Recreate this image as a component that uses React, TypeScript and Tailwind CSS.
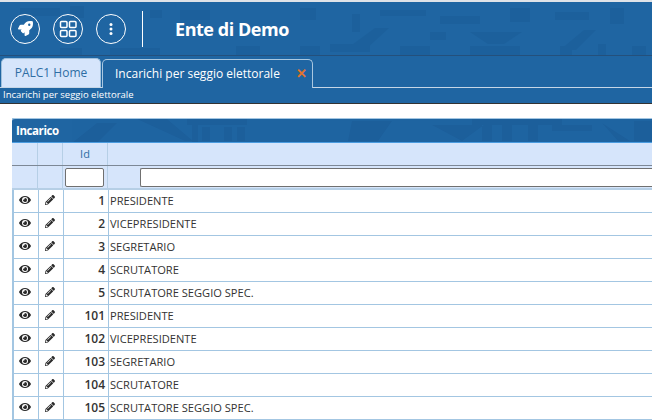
import React from "react";
import { FaRocket, FaEye, FaPencilAlt } from "react-icons/fa";

const rows: [number, string][] = [
  [1, "PRESIDENTE"],
  [2, "VICEPRESIDENTE"],
  [3, "SEGRETARIO"],
  [4, "SCRUTATORE"],
  [5, "SCRUTATORE SEGGIO SPEC."],
  [101, "PRESIDENTE"],
  [102, "VICEPRESIDENTE"],
  [103, "SEGRETARIO"],
  [104, "SCRUTATORE"],
  [105, "SCRUTATORE SEGGIO SPEC."],
];

const blocks: [number, number, number, number][] = [
  [20, 6, 40, 8], [70, 4, 14, 12], [110, 46, 50, 7], [180, 8, 30, 10], [236, 44, 24, 10], [300, 6, 16, 12],
  [330, 42, 40, 8], [352, 12, 8, 18], [380, 8, 46, 6], [400, 44, 30, 10], [440, 14, 40, 8], [470, 44, 50, 9],
  [510, 6, 20, 14], [555, 10, 34, 8], [560, 44, 12, 10], [610, 6, 14, 16], [632, 44, 14, 10], [598, 42, 8, 12],
  [300, 44, 20, 9], [60, 46, 22, 8], [430, 30, 16, 8], [150, 8, 12, 8],
];

function Texture() {
  return (
    <svg className="absolute left-0 top-0 w-[652px] h-[55px] pointer-events-none" viewBox="0 0 652 55" fill="#17568f" opacity="0.3">
      {blocks.map(([x, y, w, h], i) => (
        <rect key={i} x={x} y={y} width={w} height={h} />
      ))}
      <path d="M345 48l30-22h14l-24 22zM470 30h52l-18 12h-16zM560 48l24-20h12l-20 20z" />
    </svg>
  );
}

function TitleTexture() {
  return (
    <svg className="absolute left-0 top-0 w-[640px] h-[24px] pointer-events-none" viewBox="0 0 640 24" fill="#17568f" opacity="0.35">
      <path d="M60 24L85 4h20l-20 20zM125 0h30l26 22h-8zM175 0h60v6h-60zM180 6h6v18h-6zM190 8h8v14h-8zM212 8h8v14h-8zM225 8h8v14h-8zM340 2h40l-14 20h-30zM420 6l30 16 22-16zM460 0h90v6h-90zM470 6h10v16h-10zM490 6h10v16h-10zM516 6h10v16h-10zM540 6h40v6h-40zM590 4l16 18h12zM622 2h18v20h-18z" />
    </svg>
  );
}

export default function App() {
  return (
    <div className="w-[652px] h-[420px] overflow-hidden bg-white text-[#333] font-['Open_Sans',sans-serif]">
      <div className="relative h-[104px] bg-[#1f65a2] border-t-2 border-[#dfe3e8] border-b border-b-[#333]">
        <Texture />
        <div className="relative h-[54px] border-b border-[#24507c] flex items-center">
          <div className="flex items-center pl-[10px] gap-[13px]">
            <button className="w-[30px] h-[30px] rounded-full border-[1.5px] border-white flex items-center justify-center">
              <FaRocket size={15} color="white" />
            </button>
            <button className="w-[30px] h-[30px] rounded-full border-[1.5px] border-white flex items-center justify-center">
              <svg width="20" height="20" viewBox="0 0 20 20" fill="none" stroke="white" strokeWidth="1.500">
                <rect x="2.500" y="2.500" width="6.500" height="6" rx="1" />
                <rect x="11.500" y="2.500" width="6.500" height="6" rx="1" />
                <rect x="2.500" y="11.500" width="6.500" height="6" rx="1" />
                <rect x="11.500" y="11.500" width="6.500" height="6" rx="1" />
              </svg>
            </button>
            <button className="w-[30px] h-[30px] rounded-full border-[1.5px] border-white flex items-center justify-center">
              <svg width="4" height="14" viewBox="0 0 4 14" fill="white">
                <circle cx="2" cy="2.500" r="1.500" />
                <circle cx="2" cy="7" r="1.500" />
                <circle cx="2" cy="11.500" r="1.500" />
              </svg>
            </button>
          </div>
          <div className="w-px h-[36px] bg-white ml-[16px]" />
          <div className="ml-[32px] text-[18px] font-bold text-white leading-none tracking-[-0.45px]">Ente di Demo</div>
        </div>
        <div className="relative h-[32px] flex items-end pl-[1px] border-b border-[#c6d6e6]">
          <div className="w-[100px] h-[29px] bg-[#d6e5fb] rounded-t-[5px] border border-[#9fc0dc] border-b-0 flex items-center justify-center text-[12px] text-[#2e6da4]">
            PALC1 Home
          </div>
          <div className="relative z-10 -mb-px ml-px w-[211px] h-[29px] bg-[#1f65a2] rounded-t-[5px] border border-[#a9c7e0] border-b-0 flex items-center pl-[12px] text-[12px] text-white">
            Incarichi per seggio elettorale
            <span className="absolute right-[5px] top-[3px] text-[#e2742e] text-[13px] font-bold leading-[20px]">✕</span>
          </div>
        </div>
        <div className="relative h-[15px] pl-[3px] text-[9.500px] leading-[14px] text-white">Incarichi per seggio elettorale</div>
      </div>
      <div className="h-[14px]" />
      <div className="ml-[12px] border-l-2 border-[#a3c6e2]">
        <div className="-ml-[2px] relative h-[25px] bg-[#1f65a2] rounded-tl-[3px] border-t border-[#a3c6e2] border-b border-b-[#4a9ce0] flex items-center pl-[4px] text-[11.500px] font-bold tracking-[-0.4px] text-white overflow-hidden">
          <TitleTexture />
          <span className="relative">Incarico</span>
        </div>
        <div className="-ml-[2px] flex h-[23px] bg-[#d6e5fb] border-b border-[#7d8896] text-[11px] text-[#2e6da4]">
          <div className="w-[26px] border-r border-[#b6cfe6]" />
          <div className="w-[25px] border-r border-[#b6cfe6]" />
          <div className="w-[45px] border-r border-[#b6cfe6] flex items-center justify-center">Id</div>
          <div className="flex-1" />
        </div>
        <div className="-ml-[2px] flex h-[24px] bg-[#d6e5fb] border-b-2 border-[#b6cfe6]">
          <div className="w-[26px] border-r border-[#b6cfe6]" />
          <div className="w-[25px] border-r border-[#b6cfe6]" />
          <div className="w-[45px] border-r border-[#b6cfe6] flex items-start pl-[2px] pt-[2px]">
            <div className="w-[39px] h-[19px] bg-white border border-[#707070] rounded-[2px]" />
          </div>
          <div className="flex-1 pl-[32px] pt-[2px]">
            <div className="w-full h-[19px] bg-white border border-[#707070] border-r-0 rounded-l-[2px]" />
          </div>
        </div>
        {rows.map(([id, label]) => (
          <div key={id} className="flex h-[23px] border-b border-[#a3c6e2] text-[11.100px] leading-[22px]">
            <div className="w-[25px] border-r border-[#a3c6e2] flex items-center justify-center pb-[2px] pr-[2px]"><FaEye size={12} color="#2a2a2a" /></div>
            <div className="w-[25px] border-r border-[#a3c6e2] flex items-center justify-center pb-[2px] pr-[3px]"><FaPencilAlt size={10} color="#2a2a2a" /></div>
            <div className="w-[45px] border-r border-[#a3c6e2] text-right pr-[3px] text-[12px] font-semibold">{id}</div>
            <div className="flex-1 pl-px">{label}</div>
          </div>
        ))}
      </div>
    </div>
  );
}
